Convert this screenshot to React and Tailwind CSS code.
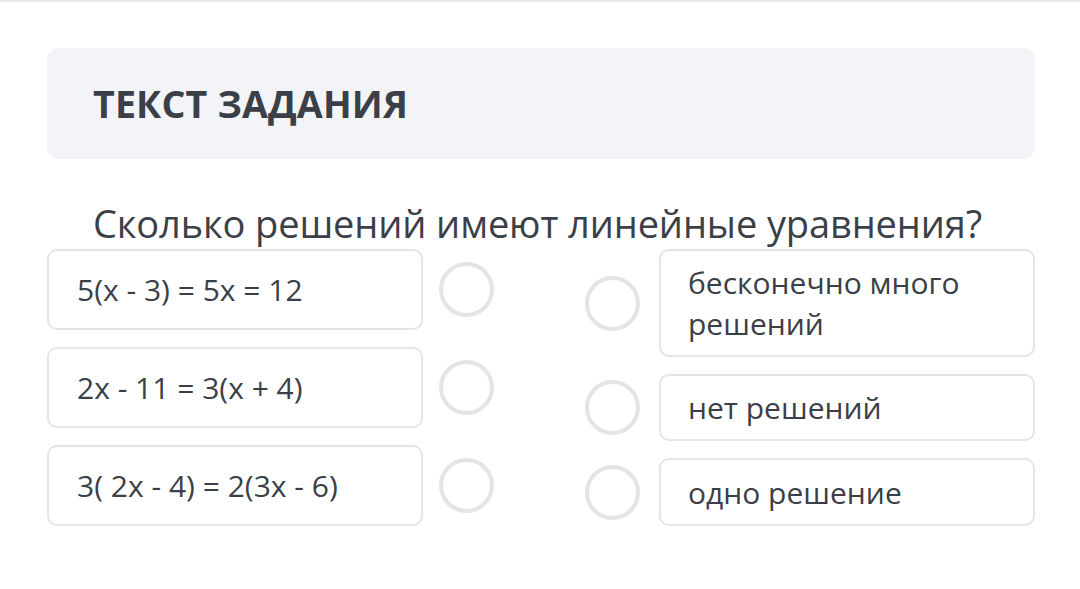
import React from "react";

const left = ["5(x - 3) = 5x = 12", "2x - 11 = 3(x + 4)", "3( 2x - 4) = 2(3x - 6)"];

const right = [
  { text: "бесконечно много решений", h: "h-[108px]" },
  { text: "нет решений", h: "h-[67px]" },
  { text: "одно решение", h: "h-[68px]" },
];

function Circle() {
  return <span className="block h-[55px] w-[55px] shrink-0 rounded-full border-[4px] border-[#e2e4e8] bg-white" />;
}

export default function App() {
  return (
    <div
      className="min-h-[589px] w-[1080px] border-t-2 border-[#e6e7e9] bg-white text-[#3b3f47]"
      style={{ fontFamily: '"Open Sans", "Noto Sans", sans-serif' }}
    >
      <div className="pl-[47px] pr-[45px] pt-[46px]">
        {/* Заголовок */}
        <div className="flex h-[111px] items-center rounded-xl bg-[#f2f4f7] pl-[46px]">
          <h1 className="text-[37.6px] font-bold leading-none tracking-[0.004em]">ТЕКСТ ЗАДАНИЯ</h1>
        </div>

        <p className="mt-[41px] pl-[46px] text-[38px] leading-[46px] tracking-[-0.003em]">Сколько решений имеют линейные уравнения?</p>

        <div className="mt-[3px] flex justify-between">
          {/* Левая колонка */}
          <div className="flex flex-col gap-[17px]">
            {left.map((t) => (
              <div key={t} className="flex items-center gap-[16px]">
                <div className="flex h-[81px] w-[376px] items-center rounded-[10px] border-2 border-[#e3e5e9] pl-[28px] text-[30px]">
                  {t}
                </div>
                <Circle />
              </div>
            ))}
          </div>

          {/* Правая колонка */}
          <div className="flex flex-col gap-[17px]">
            {right.map((r) => (
              <div key={r.text} className="flex items-center gap-[19px]">
                <Circle />
                <div
                  className={`flex w-[376px] items-center rounded-[10px] border-2 border-[#e3e5e9] pl-[27px] pr-[40px] text-[30px] leading-[41px] ${r.h}`}
                >
                  {r.text}
                </div>
              </div>
            ))}
          </div>
        </div>
      </div>
    </div>
  );
}
